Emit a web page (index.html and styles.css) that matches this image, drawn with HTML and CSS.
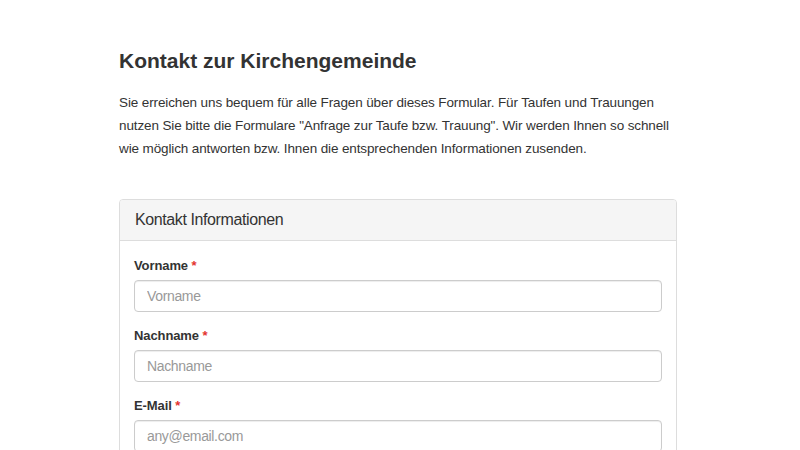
FILE: index.html
```html
<!DOCTYPE html>
<html lang="de">
<head>
<meta charset="utf-8">
<title>Kontakt zur Kirchengemeinde</title>
<link rel="stylesheet" href="styles.css">
</head>
<body>
<div class="container">
  <h1 class="title">Kontakt zur Kirchengemeinde</h1>
  <p class="intro">Sie erreichen uns bequem für alle Fragen über dieses Formular. Für Taufen und Trauungen nutzen Sie bitte die Formulare "Anfrage zur Taufe bzw. Trauung". Wir werden Ihnen so schnell wie möglich antworten bzw. Ihnen die entsprechenden Informationen zusenden.</p>
  <div class="panel">
    <div class="panel-heading">Kontakt Informationen</div>
    <div class="panel-body">
      <div class="form-group">
        <label class="label" for="vorname">Vorname <span class="req">*</span></label>
        <input class="input" id="vorname" type="text" placeholder="Vorname">
      </div>
      <div class="form-group">
        <label class="label" for="nachname">Nachname <span class="req">*</span></label>
        <input class="input" id="nachname" type="text" placeholder="Nachname">
      </div>
      <div class="form-group">
        <label class="label" for="email">E-Mail <span class="req">*</span></label>
        <input class="input" id="email" type="email" placeholder="any@email.com">
      </div>
    </div>
  </div>
</div>
</body>
</html>
```
FILE: styles.css
```css
html, body {
  margin: 0;
  padding: 0;
  background: #fff;
}
body {
  font-family: "Liberation Sans", Arial, Helvetica, sans-serif;
  font-size: 14px;
  color: #333;
}
.container {
  width: 558px;
  margin-left: 119px;
  padding-top: 49px;
}
.title {
  margin: 0;
  font-size: 21px;
  line-height: 24px;
  font-weight: bold;
  color: #333;
}
.intro {
  margin: 18px 0 0;
  font-size: 13.5px;
  letter-spacing: -0.12px;
  line-height: 23px;
}
.panel {
  margin-top: 39px;
  border: 1px solid #ddd;
  border-radius: 4px;
}
.panel-heading {
  background: #f5f5f5;
  border-bottom: 1px solid #ddd;
  border-radius: 3px 3px 0 0;
  padding: 10px 15px;
  font-size: 16px;
  letter-spacing: -0.4px;
  line-height: 20px;
  color: #333;
}
.panel-body {
  padding: 15px 14px 20px;
}
.form-group {
  display: flex;
  flex-direction: column;
  margin-bottom: 14px;
}
.label {
  font-size: 13px;
  font-weight: bold;
  letter-spacing: -0.1px;
  line-height: 20px;
  margin-bottom: 4px;
}
.req {
  color: #e3342f;
  font-weight: bold;
}
.input {
  box-sizing: border-box;
  height: 32px;
  width: 100%;
  margin: 0;
  padding: 6px 12px;
  border: 1px solid #ccc;
  border-radius: 4px;
  box-shadow: inset 0 1px 1px rgba(0,0,0,0.075);
  font-family: "Liberation Sans", Arial, Helvetica, sans-serif;
  font-size: 14px;
  letter-spacing: -0.35px;
  color: #555;
  background: #fff;
}
.input::placeholder {
  color: #999;
  opacity: 1;
}
```
